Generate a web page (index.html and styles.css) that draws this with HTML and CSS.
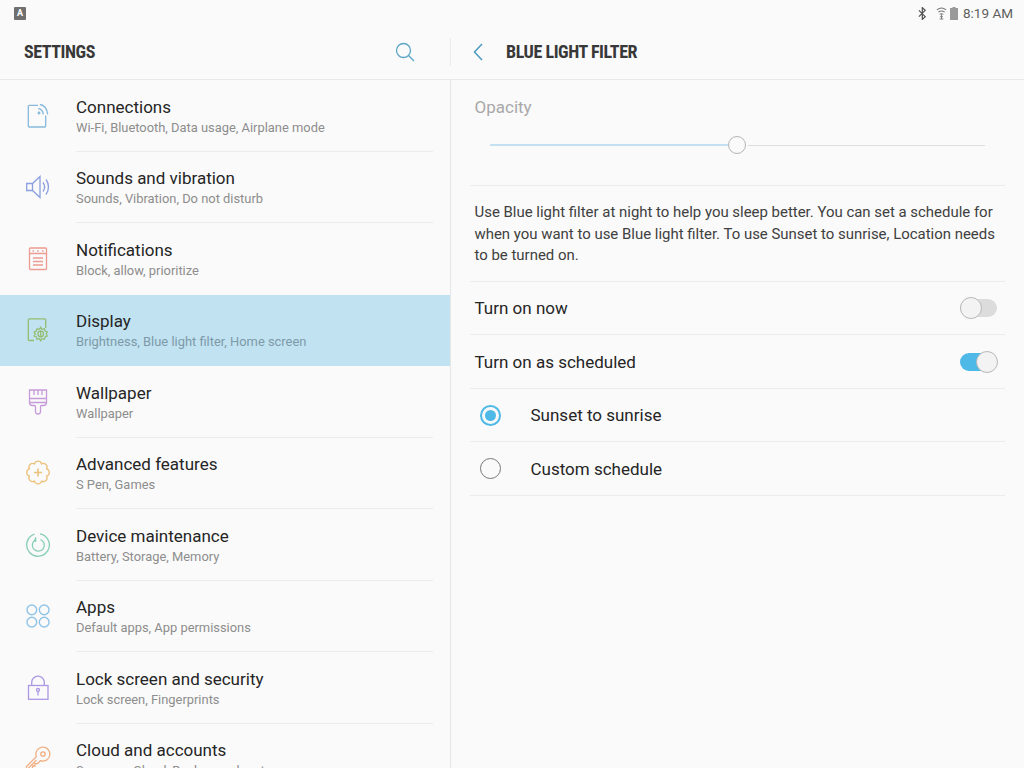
FILE: index.html
```html
<!DOCTYPE html>
<html lang="en">
<head>
  <meta charset="UTF-8">
  <title>Blue light filter</title>
  <link rel="stylesheet" href="styles.css">
</head>
<body>
  <div class="statusbar">
    <span class="notif-icon">A</span>
    <div class="status-right">
      <svg class="st-bt" viewBox="0 0 10 14"><path d="M1 3.500l7 7-3.200 3V.5L8 3.500l-7 7" fill="none" stroke="#555" stroke-width="1.400"/></svg>
      <svg class="st-wifi" viewBox="0 0 12 14"><path d="M1 3c3-2.400 7-2.400 10 0M2.500 5.500c2.200-1.600 4.800-1.600 7 0M4 8c1.200-.8 2.800-.8 4 0" fill="none" stroke="#777" stroke-width="1.100"/><path d="M6 8v5M4 13h4M4.500 10.500h3" stroke="#777" stroke-width="1"/></svg>
      <svg class="st-batt" viewBox="0 0 8 13"><path d="M2.500 0h3v1H8v12H0V1h2.500z" fill="#999"/></svg>
      <span class="clock">8:19 AM</span>
    </div>
  </div>

  <div class="main">
    <div class="left">
      <div class="left-head">
        <h1>SETTINGS</h1>
        <svg class="search" viewBox="0 0 20 20"><circle cx="8.500" cy="8.500" r="7" fill="none" stroke="#5ba4c4" stroke-width="1.300"/><path d="M13.500 13.500l5.500 5.500" stroke="#5ba4c4" stroke-width="1.300"/></svg>
        <div class="head-sep"></div>
      </div>
      <ul class="menu">
        <li class="item">
          <svg class="icon" viewBox="0 0 24 26" stroke="#86b9dc"><path d="M12 2.300H3.300a1 1 0 0 0-1 1V23a1 1 0 0 0 1 1h15.400a1 1 0 0 0 1-1V12.500"/><path d="M14 1.500c4 .6 7 4.500 7.700 9.800M12.300 5.500c2.700.4 4.600 2.600 5 5.800"/><circle cx="13" cy="10" r=".8"/></svg>
          <div class="text"><div class="title">Connections</div><div class="sub">Wi-Fi, Bluetooth, Data usage, Airplane mode</div></div>
        </li>
        <li class="item">
          <svg class="icon" viewBox="0 0 26 24" stroke="#8a9fe0"><path d="M1.700 8.500v7h5.800l7.500 7V1.500l-7.500 7z"/><path d="M7.500 8.500v7M18 7.500c2 2.700 2 6.300 0 9M21 4.500c3.300 4.500 3.300 10.500 0 15"/></svg>
          <div class="text"><div class="title">Sounds and vibration</div><div class="sub">Sounds, Vibration, Do not disturb</div></div>
        </li>
        <li class="item">
          <svg class="icon" viewBox="0 0 24 26" stroke="#ec9c92"><rect x="3.500" y="2" width="17" height="21.500" rx="1"/><path d="M3.500 7.500h17M7 12h10M7 15.500h10M7 19h10"/><path d="M6.500 5h1.500M11.200 5h1.500M16 5h1.500" stroke-width="1.600"/></svg>
          <div class="text"><div class="title">Notifications</div><div class="sub">Block, allow, prioritize</div></div>
        </li>
        <li class="item active">
          <svg class="icon" viewBox="0 0 24 26" stroke="#93bd72"><path d="M8 23.500H3.300a1 1 0 0 1-1-1V2.800a1 1 0 0 1 1-1h15.400a1 1 0 0 1 1 1V11"/><path d="M14.700 10.300l1.300 2 2.400-.6.700 2.400 2.100 1-1 1.900 1 1.900-2.100 1-.7 2.400-2.400-.6-1.300 2-1.300-2-2.400.6-.7-2.400-2.100-1 1-1.900-1-1.900 2.100-1 .7-2.400 2.400.6z" stroke-width="1.300"/><circle cx="14.700" cy="17" r="2.800" stroke-width="1.300"/><path d="M14.700 13.500v7"/></svg>
          <div class="text"><div class="title">Display</div><div class="sub">Brightness, Blue light filter, Home screen</div></div>
        </li>
        <li class="item">
          <svg class="icon" viewBox="0 0 24 26" stroke="#c79ada"><path d="M3.500 1v12.500h17V1zM3.500 9.500h17"/><path d="M8 1v5M12 1v5M16 1v5"/><path d="M3.500 13.500c0 2 1.500 3 3 3H8.500c.8 0 1 .6 1 1.300V22.500a2.500 2.500 0 0 0 5 0v-4.700c0-.7.200-1.300 1-1.300h2c1.500 0 3-1 3-3"/></svg>
          <div class="text"><div class="title">Wallpaper</div><div class="sub">Wallpaper</div></div>
        </li>
        <li class="item">
          <svg class="icon" viewBox="0 0 26 26" stroke="#ecc27c"><path d="M9.440 3.910A3.700 3.700 0 0 1 16.560 3.910A3.700 3.700 0 0 1 21.590 8.940A3.700 3.700 0 0 1 21.590 16.060A3.700 3.700 0 0 1 16.560 21.090A3.700 3.700 0 0 1 9.440 21.090A3.700 3.700 0 0 1 4.410 16.060A3.700 3.700 0 0 1 4.410 8.940A3.700 3.700 0 0 1 9.440 3.910z"/><path d="M13 8.500v8M9 12.500h8" stroke-width="1.600"/></svg>
          <div class="text"><div class="title">Advanced features</div><div class="sub">S Pen, Games</div></div>
        </li>
        <li class="item">
          <svg class="icon" viewBox="0 0 26 26" stroke="#86cdb8"><path d="M15 1.800A11.300 11.300 0 1 1 9.500 2.200"/><path d="M15.500 7.600a6 6 0 1 1-5 .3"/><path d="M10.500 5.500v4.500" stroke-width="1.600"/></svg>
          <div class="text"><div class="title">Device maintenance</div><div class="sub">Battery, Storage, Memory</div></div>
        </li>
        <li class="item">
          <svg class="icon" viewBox="0 0 24 24" stroke="#8fc4e6"><circle cx="6.300" cy="6.300" r="4.500"/><circle cx="17.700" cy="6.300" r="4.500"/><circle cx="6.300" cy="17.700" r="4.500"/><circle cx="17.700" cy="17.700" r="4.500"/></svg>
          <div class="text"><div class="title">Apps</div><div class="sub">Default apps, App permissions</div></div>
        </li>
        <li class="item">
          <svg class="icon" viewBox="0 0 24 26" stroke="#ac98e4"><rect x="2.500" y="10.500" width="19.500" height="13.800"/><path d="M5.700 10.500V7.500a6.300 6.300 0 0 1 12.600 0v3"/><circle cx="12" cy="15" r="1.500"/><path d="M12 16.500v4"/></svg>
          <div class="text"><div class="title">Lock screen and security</div><div class="sub">Lock screen, Fingerprints</div></div>
        </li>
        <li class="item">
          <svg class="icon" viewBox="0 0 26 26" stroke="#f0ae82"><path d="M11.300 10.600A7 7 0 1 1 15.400 14.700L12.500 17.600H10V20H7.500V22.500L5 24.500H1.500V20.500z"/><circle cx="18" cy="8" r="2.200"/><path d="M3.500 22l8-8"/></svg>
          <div class="text"><div class="title">Cloud and accounts</div><div class="sub">Samsung Cloud, Backup and restore</div></div>
        </li>
      </ul>
    </div>

    <div class="right">
      <div class="right-head">
        <svg class="back" viewBox="0 0 10 18"><path d="M9 1L1.500 9 9 17" fill="none" stroke="#4f9dc2" stroke-width="1.600"/></svg>
        <h2>BLUE LIGHT FILTER</h2>
      </div>
      <div class="content">
        <div class="opacity">
          <div class="opacity-label">Opacity</div>
          <div class="slider">
            <div class="track-on"></div>
            <div class="thumb"></div>
            <div class="track-off"></div>
          </div>
        </div>
        <p class="desc">Use Blue light filter at night to help you sleep better. You can set a schedule for when you want to use Blue light filter. To use Sunset to sunrise, Location needs to be turned on.</p>
        <div class="row"><span>Turn on now</span><div class="switch"><div class="knob"></div></div></div>
        <div class="row"><span>Turn on as scheduled</span><div class="switch on"><div class="knob"></div></div></div>
        <div class="row radio-row"><div class="radio on"></div><span>Sunset to sunrise</span></div>
        <div class="row radio-row"><div class="radio"></div><span>Custom schedule</span></div>
      </div>
    </div>
  </div>
</body>
</html>
```
FILE: styles.css
```css
* {
  margin: 0;
  padding: 0;
  box-sizing: border-box;
}

html, body {
  width: 1024px;
  height: 768px;
  overflow: hidden;
  background-color: #fafafa;
  font-family: 'Roboto', sans-serif;
  color: #252525;
}

.statusbar {
  height: 26px;
  display: flex;
  justify-content: space-between;
  align-items: center;
  padding: 0 11px 0 14px;
}

.notif-icon {
  width: 12px;
  height: 13px;
  background-color: #6f6f6f;
  border-radius: 1px;
  color: #fff;
  font-size: 9px;
  font-weight: 700;
  line-height: 13px;
  text-align: center;
}

.status-right {
  display: flex;
  align-items: center;
}

.st-bt {
  width: 9px;
  height: 13px;
  margin-right: 9px;
}

.st-wifi {
  width: 11px;
  height: 13px;
  margin-right: 3px;
}

.st-batt {
  width: 8px;
  height: 13px;
  margin-right: 5px;
}

.clock {
  font-size: 13.500px;
  color: #5e5e5e;
}

.main {
  display: flex;
  height: 742px;
}

.left {
  width: 451px;
  overflow: hidden;
}

.left-head {
  height: 54px;
  display: flex;
  align-items: center;
  padding: 0 0 2px 24px;
  border-bottom: 1px solid #e8e8e8;
}

.left-head h1 {
  flex: 1;
}

.head-sep {
  width: 1px;
  height: 28px;
  margin-left: 35px;
  background-color: #ececec;
}

h1, h2 {
  font-size: 18px;
  font-weight: 700;
  font-stretch: condensed;
  letter-spacing: -0.450px;
  color: #383838;
}

.search {
  width: 20px;
  height: 20px;
}

.menu {
  list-style: none;
  border-right: 1px solid #e6e6e6;
}

.item {
  height: 71.500px;
  display: flex;
  align-items: center;
  padding-left: 25px;
}

.icon {
  width: 26px;
  height: 26px;
  flex-shrink: 0;
  fill: none;
  stroke-width: 1.300;
}

.text {
  flex: 1;
  height: 100%;
  margin: 0 17px 0 25px;
  padding-top: 15.500px;
  border-bottom: 1px solid #ececec;
}

.title {
  font-size: 17px;
  line-height: 22px;
  color: #252525;
}

.sub {
  font-size: 12.900px;
  line-height: 19px;
  color: #8d8d8d;
}

.item.active {
  background-color: #c1e2f1;
}

.item.active .text,
.item:has(+ .active) .text {
  border-bottom-color: transparent;
}

.item.active .sub {
  color: #7d9aa8;
}

.right {
  flex: 1;
}

.right-head {
  height: 54px;
  display: flex;
  align-items: center;
  padding: 0 0 2px 22px;
  border-bottom: 1px solid #e8e8e8;
}

.back {
  width: 10px;
  height: 18px;
}

.right-head h2 {
  margin-left: 23px;
}

.content {
  margin: 0 19px;
}

.opacity {
  height: 106px;
  border-bottom: 1px solid #ececec;
  padding: 15px 4.500px 0;
}

.opacity-label {
  font-size: 17px;
  line-height: 24px;
  color: #a8a8a8;
}

.slider {
  display: flex;
  align-items: center;
  margin: 16px 15.500px 0;
  height: 20px;
}

.track-on {
  width: 238px;
  height: 2px;
  background-color: #c4e1f1;
}

.thumb {
  width: 18px;
  height: 18px;
  border: 1.500px solid #b5b5b5;
  border-radius: 50%;
  background-color: #fafafa;
}

.track-off {
  flex: 1;
  height: 1px;
  margin-left: 2px;
  background-color: #dedede;
}

.desc {
  height: 95.500px;
  padding: 16px 4.500px 0;
  font-size: 14.950px;
  line-height: 21.500px;
  color: #404040;
  border-bottom: 1px solid #ececec;
}

.row {
  height: 53.500px;
  display: flex;
  justify-content: space-between;
  align-items: center;
  padding: 0.500px 8px 0 4.500px;
  font-size: 17px;
  border-bottom: 1px solid #ececec;
}

.switch {
  position: relative;
  width: 37px;
  height: 18px;
  border-radius: 9px;
  background-color: #dcdcdc;
}

.knob {
  position: absolute;
  left: 0;
  top: -2px;
  width: 22px;
  height: 22px;
  border: 1.500px solid #b8b8b8;
  border-radius: 50%;
  background-color: #f3f3f3;
}

.switch.on {
  background-color: #4eb9e6;
}

.switch.on .knob {
  left: auto;
  right: -1px;
}

.radio-row {
  justify-content: flex-start;
  padding-left: 10px;
}

.radio {
  width: 21px;
  height: 21px;
  margin-right: 29.500px;
  border: 1.500px solid #777;
  border-radius: 50%;
}

.radio.on {
  border: 2px solid #4eb9e6;
  padding: 3px;
  background-color: #4eb9e6;
  background-clip: content-box;
}
```
